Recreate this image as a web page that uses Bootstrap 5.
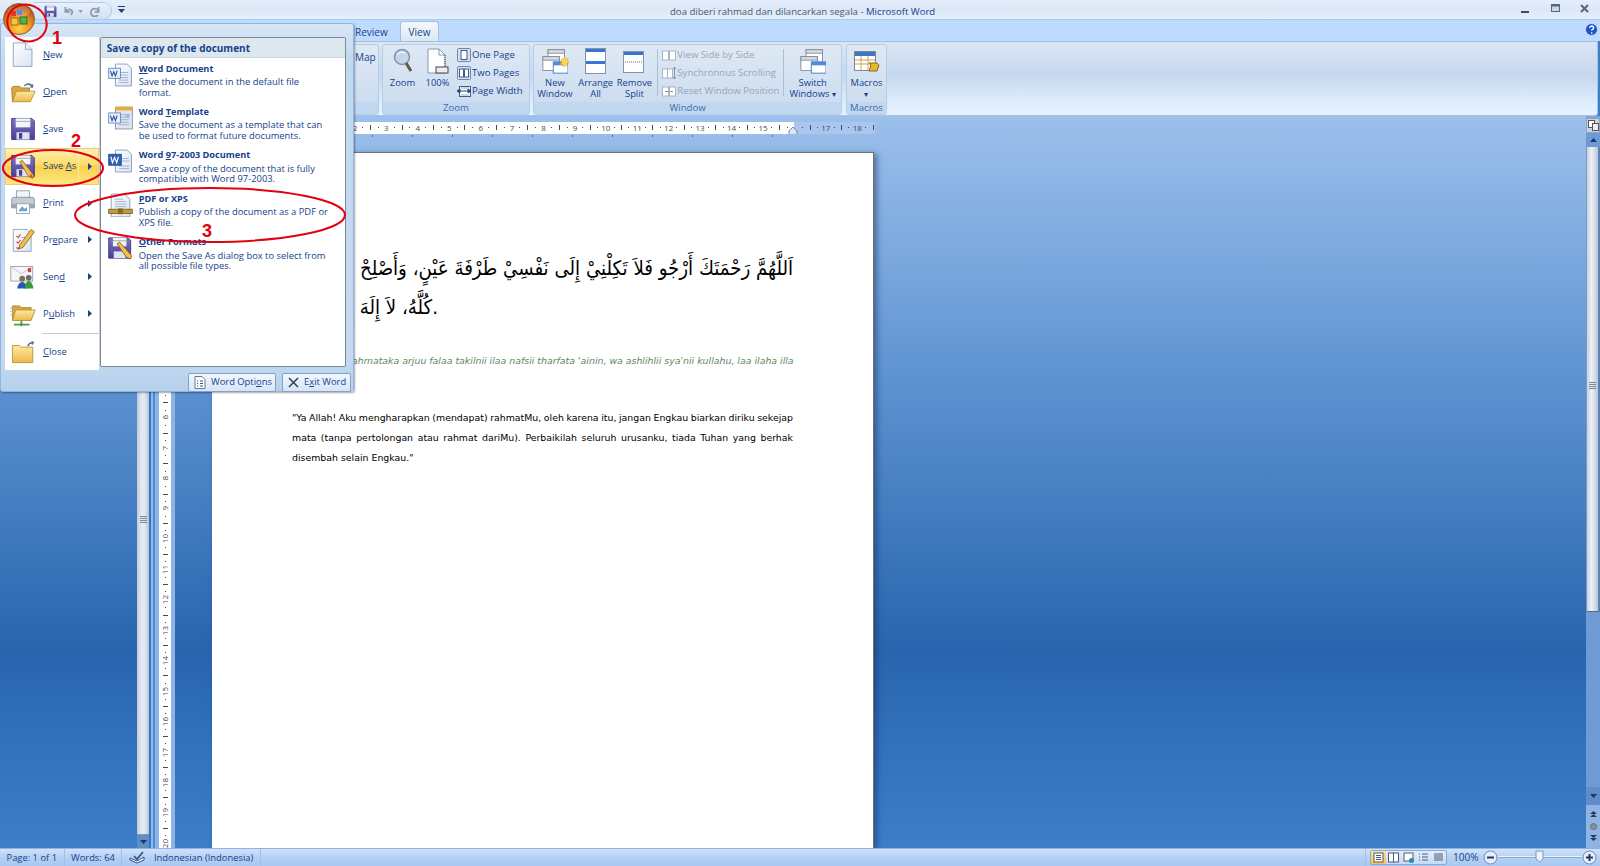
<!DOCTYPE html>
<html lang="id">
<head>
<meta charset="UTF-8">
<title>doa diberi rahmad dan dilancarkan segala - Microsoft Word</title>
<link href="https://cdn.jsdelivr.net/npm/bootstrap@5.3.1/dist/css/bootstrap.min.css" rel="stylesheet">
<style>
    html, body { height: 100%; }
    body { font-family: "Open Sans", "Noto Sans", sans-serif; font-size: 10px; color: #15428b; background: #3d7ec9; overflow: hidden; }
    svg { display: block; flex: none; }

    /* title bar + tabs */
    .titlebar { height: 20px; background: linear-gradient(#e6eefa, #dbe7f7 50%, #e6f0fc); border-bottom: 1px solid #a8c9f0; }
    .orb { width: 32px; height: 32px; margin: 3px 0 0 3px; z-index: 15; position: relative; }
    .qat { margin: 2px 0 0 -1px; height: 18px; width: 78px; border: 1px solid #b6cbe8; border-left: 0; border-radius: 0 10px 10px 0; background: linear-gradient(#e8f0fb, #d3e1f3); padding-left: 10px; }
    .qat .q-undo { margin-left: 6px; }
    .qat .q-drop { margin-left: 4px; }
    .qat .q-redo { margin-left: 7px; }
    .qat-more { margin-left: 6px; }
    .title-text { font-size: 9.6px; color: #4b5a70; left: 670px; top: 5px; }
    .title-text b { font-weight: 400; color: #15428b; }
    .winbtns { margin-left: auto; gap: 17px; padding: 3px 9px 0 0; }
    .tabs { height: 21px; background: #bfdbff; }
    .tab-review { margin-left: 355px; padding-top: 5px; width: 45px; font-size: 10px; }
    .tab-view { width: 39px; height: 20px; margin-top: 1px; background: linear-gradient(#f5f9fe, #dbe6f4); border: 1px solid #9ebfe6; border-bottom: 0; border-radius: 3px 3px 0 0; padding-top: 3px; font-size: 10px; }
    .help { margin: 3px 2px 0 auto; }

    /* ribbon */
    .ribbon { height: 75px; padding: 2px 2px 2px 3px; gap: 3px; background: linear-gradient(#dbe6f4, #c6d8ee 45%, #dcecfb 80%, #e6f3fe); border: 1px solid #a5c4e8; border-top-color: #9ebfe6; border-radius: 0 0 3px 3px; margin-right: 2px; }
    .rgroup { height: 71px; border: 1px solid #b7cde6; border-radius: 3px; background: linear-gradient(#dfe9f5, #c9daee); overflow: hidden; }
    .rgroup-body { height: 58px; }
    .rgroup-label { height: 12px; line-height: 11px; background: #c1d8f0; text-align: center; font-size: 9.6px; color: #3e6aaa; }
    .g-first { width: 375px; }
    .g-zoom { width: 148px; }
    .g-window { width: 309px; }
    .g-macros { width: 41px; margin-left: 1px; }
    .big { padding-top: 3px; line-height: 10.5px; font-size: 9.4px; text-align: center; }
    .big svg { margin-bottom: 4px; }
    .w-zoom { width: 39px; }
    .w-pct { width: 31px; }
    .w-new { width: 42px; }
    .w-arr { width: 40px; }
    .w-rem { width: 38px; }
    .w-sw { width: 57px; }
    .w-mac { width: 39px; }
    .small-col { padding: 3px 0 0 4px; gap: 4px; }
    .small-btn { height: 14px; gap: 1px; font-size: 9.6px; line-height: 14px; white-space: nowrap; }
    .g-window .small-col { padding-left: 4px; }
    .disabled-btn { color: #9aa6b6; }
    .rsep { width: 1px; height: 47px; margin-top: 4px; background: #a9bfd9; }
    .map { padding: 5px 0 0 350px; font-size: 10px; }

    /* workspace */
    .workspace { min-height: 0; background: linear-gradient(#9dc0ec, #5f94d2 35%, #2865ae 73%, #3d7ec9); overflow: hidden; }
    .left-blank { width: 137px; }
    .lscroll { width: 12px; background: #6f9ad0; }
    .lthumb { background: linear-gradient(90deg, #c0cbdb, #e6ebf2 40%, #dfe5ee 70%, #b3c2d6); border-bottom: 1px solid #8496b0; }
    .grip { width: 7px; height: 7px; background: repeating-linear-gradient(#7d8997 0 1px, transparent 1px 2px); }
    .lthumb .grip { margin-top: 400px; }
    .rthumb .grip { margin-top: 235px; }
    .arrow-box { height: 13px; background: #5f8dc7; }
    .vband { width: 26px; padding-left: 1px; background: linear-gradient(90deg, #3a76c0 0 2px, #8fbaee 2px 4px, #4d8ada 4px 6px, #8fb3e4 6px); }
    .vruler { width: 12px; height: 100%; margin-left: 9px; padding-top: 123px; background: linear-gradient(#a9c6ec 0 117px, #fff 117px); }
    .vcell { height: 31.3px; }
    .vcell span, .hcell span { flex: 1 1 0; }
    .mk { display: flex; align-items: center; justify-content: center; font-size: 8px; color: #3f4d63; line-height: 1; }
    .mk i { display: block; background: #3f4d63; }
    .hcell .mk-dot i { width: 1px; height: 1px; }
    .hcell .mk-tick i { width: 1px; height: 5px; }
    .vcell .mk-dot i { width: 1px; height: 1px; }
    .vcell .mk-tick i { width: 5px; height: 1px; }
    .vcell .mk-num { writing-mode: vertical-rl; transform: rotate(180deg); }
    .main { min-width: 0; }
    .hruler { width: 663px; height: 13px; margin: 6px 0 0 37px; padding-left: 84px; background: linear-gradient(90deg, #a9c6ec 0 80px, #fff 80px 582px, #a9c6ec 582px); overflow: hidden; position: relative; }
    .hcell { flex: none; width: 31.45px; }
    .indent { left: 576px; top: 5px; }
    .tabstops { width: 481px; height: 2px; margin: 1px 0 0 117px; background: repeating-linear-gradient(90deg, #4d6f9f 0 1px, transparent 1px 40px); }
    .page { width: 662px; height: 760px; margin: 15px 0 0 37px; padding: 96px 80px 0; background: #fff; border: 1px solid #707070; border-bottom: 0; border-left: 0; box-shadow: 3px 2px 6px rgba(20, 50, 100, .55); color: #000; font-family: "DejaVu Sans", sans-serif; }
    .ar { font-family: "DejaVu Sans Condensed", "DejaVu Sans", sans-serif; font-size: 20.2px; line-height: 39px; height: 39px; white-space: nowrap; }
    .ar-line1 { direction: rtl; }
    .ar-line2 { direction: rtl; width: 146px; }
    .latin { margin: 24px 0 0; color: #64855f; font-style: italic; font-size: 9.4px; line-height: 20px; text-align: justify; text-align-last: justify; white-space: nowrap; }
    .trans { margin: 0; font-size: 9.4px; line-height: 20px; text-align: justify; text-align-last: justify; white-space: nowrap; }
    .trans.first { margin-top: 37px; word-spacing: -1.2px; }
    .trans.last { text-align-last: left; }

    .rscroll { width: 14px; background: #7da6d9; }
    .rtoggle { height: 15px; margin-top: 2px; background: #c9d3e0; border: 1px solid #8fa3bd; }
    .rarrow { height: 14px; background: #6e9bd4; }
    .rthumb { height: 465px; background: linear-gradient(90deg, #c7d0dd, #eef1f6 40%, #dde3ec 60%, #b6c6da); border-bottom: 1px solid #4f6c99; border-left: 1px solid #7c9cc8; border-right: 2px solid #5f7fb0; }
    .rtrack { flex: 1 1 auto; background: #6f9ad3; }
    .rarrow-bottom { height: 18px; background: #5f8dc9; }
    .rbrowse { height: 43px; background: #8fb4e3; padding: 6px 0; }

    /* status bar */
    .status { height: 18px; flex: none; background: linear-gradient(#cfe2f9, #b5d0f3 50%, #a9c8f0); border-top: 1px solid #8db2e3; font-size: 9.4px; line-height: 17px; }
    .st-item { border-right: 1px solid #9fbfe6; padding: 0 6.5px; height: 17px; white-space: nowrap; }
    .st-check { margin-right: 5px; }
    .st-right { margin-left: auto; display: flex; border-left: 1px solid #9fbfe6; padding-right: 3.5px; }
    .views { height: 15px; margin: 1px 0 0 4px; border: 1px solid #86a9d8; border-radius: 2px; background: linear-gradient(#e3eefb, #c5daf5); }
    .views .v { width: 15px; }
    .views .v.on { background: linear-gradient(#fde39a, #fbc14f); }
    .pct { width: 25px; margin: 0 4.5px 0 6px; font-size: 10px; }
    .slider-line { width: 84px; height: 2px; background: #eaf1fb; border-bottom: 1px solid #8ba8cf; margin-top: 7px; position: relative; }
    .slider-thumb { left: 37px; top: -6px; }
    .zbtn { margin-top: 1px; }

    /* office menu */
    .menu { left: 0; top: 23px; width: 354px; height: 369px; padding: 13px 7px 0 4px; border: 1px solid #93b5dd; border-radius: 3px; background: linear-gradient(#d8e6f7, #c2d8f1 10%, #c5daf1 90%, #b6d0ec); z-index: 10; box-shadow: 1px 1px 2px rgba(0,0,0,.35); }
    .menu-left { width: 95px; height: 333px; background: #fff; border-right: 1px solid #c9d3de; }
    .mitem { height: 36.9px; gap: 7px; padding-left: 5px; font-size: 9.4px; position: relative; white-space: nowrap; }
    .mitem u { text-underline-offset: 1px; }
    .mitem .sub { position: absolute; right: 7px; top: 15px; }
    .mitem.active { background: linear-gradient(#fdf3b6, #fddc66 45%, #fbd04a 50%, #fde884); outline: 1px solid #e9cd7a; outline-offset: -1px; }
    .mitem.active::after { content: ""; position: absolute; left: 73px; top: 1px; bottom: 1px; width: 1px; background: #f4e9b5; }
    .msep { height: 1px; margin: .5px 0 0 37px; background: #c5ccd4; }
    .menu-right { width: 247px; height: 330px; background: #fff; border: 1px solid #7d8895; border-radius: 2px; }
    .mr-head { height: 20px; line-height: 21px; padding-left: 6px; background: #dde7ee; font-weight: 700; font-size: 10px; border-bottom: 1px solid #cfd9e2; }
    .ritem { height: 43.4px; padding: 4.5px 0 0 6px; gap: 5px; }
    .ritem .ttl { font-weight: 700; font-size: 9.2px; line-height: 12px; }
    .ritem .dsc { font-size: 9.4px; line-height: 10.7px; margin-top: 2.5px; white-space: pre-line; }
    .menu-foot { gap: 6px; padding: 3px 0 0; margin-right: -5px; justify-content: flex-end; }
    .mbtn { height: 19px; gap: 5px; padding: 0 5px; font-size: 9.4px; background: linear-gradient(#f2f7fd, #d6e5f7); border: 1px solid #7ea3d3; border-radius: 2px; white-space: nowrap; }
    .w-opt { width: 88px; }
    .w-exit { width: 69px; }

    /* annotations */
    .marks { left: 0; top: 0; z-index: 20; pointer-events: none; }
    .num { color: #e3000f; font: 700 18px/14px "Liberation Sans", sans-serif; z-index: 21; }
    .n1 { left: 52px; top: 31px; }
    .n2 { left: 71px; top: 134px; }
    .n3 { left: 202px; top: 226px; line-height: 10px; }
</style>
</head>
<body class="d-flex flex-column position-relative">

<svg width="0" height="0" class="position-absolute">
    <defs>
        <linearGradient id="fold" x1="0" y1="0" x2="0" y2="1"><stop offset="0" stop-color="#fde9a0"/><stop offset="1" stop-color="#eeb84c"/></linearGradient>
        <linearGradient id="pg" x1="0" y1="0" x2="1" y2="1"><stop offset="0" stop-color="#fff"/><stop offset="1" stop-color="#d9e4f3"/></linearGradient>
        <linearGradient id="flop" x1="0" y1="0" x2="0" y2="1"><stop offset="0" stop-color="#7d73c4"/><stop offset="1" stop-color="#4a3f96"/></linearGradient>
        <radialGradient id="orbg" cx=".5" cy=".8" r=".75"><stop offset="0" stop-color="#ffd24a"/><stop offset=".55" stop-color="#ef8a1d"/><stop offset="1" stop-color="#a5460f"/></radialGradient>
        <symbol id="i-new" viewBox="0 0 32 32"><path d="M4 1h15l8 8v21H4z" fill="url(#pg)" stroke="#8497b5"/><path d="M19 1v8h8" fill="#eef3fa" stroke="#8497b5"/></symbol>
        <symbol id="i-open" viewBox="0 0 32 32"><path d="M3 28 2 11l2-2h8l2 2h10v4z" fill="#d9a83e" stroke="#9c7a2a"/><path d="M3 28l5-13h23l-6 13z" fill="url(#fold)" stroke="#b08a33"/><path d="M17 8q5-5 10-1l2-1-1 5-4-1 2-1q-4-3-8 0z" fill="#5a6e8c"/></symbol>
        <symbol id="i-save" viewBox="0 0 32 32"><path d="M2 3h25l3 3v23H2z" fill="url(#flop)" stroke="#3a3080"/><rect x="7" y="3" width="18" height="11" fill="#f4f5fb"/><rect x="7" y="6" width="18" height="1" fill="#7fb27f"/><rect x="8" y="20" width="16" height="9" fill="#dfe2f0"/><rect x="11" y="21" width="4" height="7" fill="#4a3f96"/></symbol>
        <symbol id="i-saveas" viewBox="0 0 32 32"><use href="#i-save"/><path d="M12 11l3-2 14 18-1 4-5-2z" fill="#f0c24a" stroke="#8a5a1e"/><path d="M26 25l2 6-4-2z" fill="#c9593a"/></symbol>
        <symbol id="i-print" viewBox="0 0 32 32"><rect x="8" y="1" width="16" height="10" fill="#f2f4f7" stroke="#8d97a5"/><path d="M2 12q0-3 3-3h22q3 0 3 3v10H2z" fill="#c6ccd4" stroke="#7f8a99"/><rect x="2" y="17" width="28" height="5" fill="#9ea7b3"/><rect x="8" y="17" width="16" height="12" fill="#fff" stroke="#8d97a5"/><path d="M11 25l4-5 3 3 3-2v5H11z" fill="#6ea0dc"/></symbol>
        <symbol id="i-prep" viewBox="0 0 32 32"><path d="M4 3h17l5 5v22H4z" fill="url(#pg)" stroke="#8497b5"/><path d="M8 11l2 2 3-4M8 18l2 2 3-4M8 25l2 2 3-4" fill="none" stroke="#d2403c" stroke-width="1.4"/><path d="M14 13h6M14 20h4" stroke="#8ea3c2"/><path d="M12 22 26 3l4 3-14 19-5 2z" fill="#f0c24a" stroke="#8a5a1e"/></symbol>
        <symbol id="i-send" viewBox="0 0 32 32"><rect x="1" y="3" width="27" height="18" fill="#f4f6fa" stroke="#8d97a5"/><path d="M1 3l13 9 14-9" fill="none" stroke="#b4bcc8"/><rect x="22" y="5" width="4" height="5" fill="#d2403c"/><circle cx="15" cy="18" r="3.5" fill="#8a6d4f"/><path d="M9 30q1-8 6-8t6 8z" fill="#2b55b5"/><circle cx="23" cy="17" r="3.5" fill="#6d6d6d"/><path d="M18 30q1-9 5-9t6 9z" fill="#3a9a3d"/></symbol>
        <symbol id="i-pub" viewBox="0 0 32 32"><path d="M3 6h9l2 2h12v15H3z" fill="#d9a83e" stroke="#a98532"/><path d="M3 24l4-13h24l-5 13z" fill="url(#fold)" stroke="#b08a33"/><path d="M14 24v4M5 29h19" stroke="#4aa04a" stroke-width="2"/><circle cx="14" cy="29" r="2" fill="#4aa04a"/><path d="M0 9h3M0 13h2M0 17h2" stroke="#9cb0cc"/></symbol>
        <symbol id="i-close" viewBox="0 0 32 32"><path d="M3 8h9l2 2h14v19H3z" fill="url(#fold)" stroke="#b08a33"/><path d="M21 9q2-6 6-5l-1-2 4 2-3 4v-2q-3-1-4 3z" fill="#5a6e8c"/></symbol>
        <symbol id="i-worddoc" viewBox="0 0 32 28"><path d="M10 1h14l5 5v21H10z" fill="url(#pg)" stroke="#7f97bb"/><path d="M14 11h11M14 14h11M14 17h11M14 20h11M14 23h11" stroke="#93a9c9"/><rect x="2" y="6" width="14" height="12" fill="#e8effa" stroke="#5f82b5"/><path d="M4 9l2 6 2-5 2 5 2-6" fill="none" stroke="#2b57a5" stroke-width="1.3"/></symbol>
        <symbol id="i-template" viewBox="0 0 32 28"><rect x="10" y="1" width="20" height="26" fill="#dfe6f0" stroke="#7f8ea5"/><rect x="10" y="1" width="20" height="4" fill="#eea92f"/><path d="M14 10h12M14 13h12M14 16h12M14 19h12M14 22h12" stroke="#93a9c9"/><rect x="22" y="9" width="5" height="5" fill="#9cbde6"/><rect x="2" y="8" width="14" height="12" fill="#e8effa" stroke="#5f82b5"/><path d="M4 11l2 6 2-5 2 5 2-6" fill="none" stroke="#2b57a5" stroke-width="1.3"/></symbol>
        <symbol id="i-word97" viewBox="0 0 32 28"><path d="M10 1h14l5 5v21H10z" fill="url(#pg)" stroke="#7f97bb"/><path d="M18 11h8M18 14h8M14 20h12M14 23h12" stroke="#93a9c9"/><rect x="2" y="6" width="15" height="13" fill="#2d62b8" stroke="#1f4c96"/><path d="M4.5 9l2 7 2.5-6 2.5 6 2-7" fill="none" stroke="#fff" stroke-width="1.4"/></symbol>
        <symbol id="i-pdf" viewBox="0 0 32 28"><path d="M5 1h16l6 6v21H5z" fill="url(#pg)" stroke="#8497b5"/><path d="M9 7h10M9 10h14M9 13h14M9 16h14" stroke="#93a9c9"/><rect x="2" y="19" width="28" height="5" fill="#c49a3c" stroke="#7d5e1c"/><rect x="13" y="18" width="6" height="7" fill="#8a6a24"/></symbol>
        <symbol id="i-other" viewBox="0 0 32 28"><path d="M2 2h23l3 3v21H2z" fill="url(#flop)" stroke="#3a3080"/><rect x="7" y="2" width="16" height="10" fill="#f4f5fb"/><rect x="7" y="5" width="16" height="1" fill="#7fb27f"/><rect x="8" y="18" width="14" height="8" fill="#dfe2f0"/><path d="M12 9l3-2 14 16-1 4-5-2z" fill="#f0c24a" stroke="#8a5a1e"/></symbol>
        <symbol id="r-one" viewBox="0 0 14 14"><rect x=".5" y=".5" width="13" height="13" rx="1" fill="#d6e2f1" stroke="#6a85ab"/><rect x="4" y="2.5" width="6" height="9" fill="#fff" stroke="#3f5c8a"/></symbol>
        <symbol id="r-two" viewBox="0 0 14 14"><rect x=".5" y=".5" width="13" height="13" rx="1" fill="#d6e2f1" stroke="#6a85ab"/><rect x="2.5" y="3" width="4" height="8" fill="#fff" stroke="#3f5c8a"/><rect x="7.5" y="3" width="4" height="8" fill="#fff" stroke="#3f5c8a"/></symbol>
        <symbol id="r-width" viewBox="0 0 14 14"><rect x="2.5" y="2.5" width="11" height="10" fill="#fff" stroke="#3f5c8a"/><path d="M0 7h14M0 7l3-2v4zM14 7l-3-2v4z" fill="#2b4a7c" stroke="#2b4a7c"/><path d="M4 4h8M4 11h8" stroke="#93a9c9"/></symbol>
        <symbol id="r-win" viewBox="0 0 30 30"><rect x="7" y="2" width="19" height="16" fill="#fff" stroke="#7d8896"/><rect x="7" y="2" width="19" height="4" fill="#d8dde5" stroke="#7d8896"/><rect x="1" y="10" width="19" height="16" fill="#fff" stroke="#7d8896"/><rect x="1" y="10" width="19" height="4" fill="#d8dde5" stroke="#7d8896"/><rect x="13" y="16" width="17" height="13" fill="#fff" stroke="#3c72c2"/><rect x="13" y="16" width="17" height="4" fill="#4e8ae0"/></symbol>
    </defs>
</svg>

<!-- title bar -->
<div class="titlebar d-flex flex-none position-relative">
    <svg class="orb" viewBox="0 0 32 32">
        <circle cx="16" cy="16" r="15.5" fill="url(#orbg)" stroke="#8a6a3a"/>
        <ellipse cx="16" cy="8" rx="11" ry="6" fill="#fff" opacity=".2"/>
        <rect x="14" y="7" width="5" height="5" fill="#4f8fe0"/><rect x="8" y="8" width="5" height="5" fill="#d93a2b"/>
        <rect x="8" y="15" width="7" height="7" fill="#f5c43a" stroke="#a86a10"/><rect x="17" y="14" width="7" height="7" fill="#58b146" stroke="#1e7a2c"/>
    </svg>
    <div class="qat d-flex align-items-center">
        <svg width="13" height="13"><use href="#i-save"/></svg>
        <svg class="q-undo" width="11" height="12" viewBox="0 0 14 14"><path d="M3 2v6h6M3 8q4-5 8-2 2 3-1 6" fill="none" stroke="#8a9ab2" stroke-width="2.200"/></svg>
        <svg class="q-drop" width="5" height="3" viewBox="0 0 6 4"><path d="M0 0h6L3 4z" fill="#8a9ab2"/></svg>
        <svg class="q-redo" width="11" height="12" viewBox="0 0 14 14"><path d="M11 2v6H6M11 8A5 5 0 1 0 10 12" fill="none" stroke="#8a9ab2" stroke-width="2.200"/></svg>
    </div>
    <svg class="qat-more align-self-center" width="7" height="8" viewBox="0 0 7 8"><path d="M0 0h7v1H0zM0 3h7L3.5 7z" fill="#1f3f72"/></svg>
    <div class="title-text position-absolute text-nowrap">doa diberi rahmad dan dilancarkan segala - <b>Microsoft Word</b></div>
    <div class="winbtns d-flex">
        <svg width="12" height="12" viewBox="0 0 12 12"><rect x="0" y="8" width="8" height="2" fill="#3b4d66"/></svg>
        <svg width="12" height="12" viewBox="0 0 12 12"><rect x="1.5" y="1.5" width="8" height="7" fill="#c9d6e8" stroke="#56677f"/><rect x="1.5" y="1.5" width="8" height="2" fill="#56677f"/></svg>
        <svg width="12" height="12" viewBox="0 0 12 12"><path d="M2 2l7 7M9 2l-7 7" stroke="#56677f" stroke-width="2"/></svg>
    </div>
</div>

<!-- tabs -->
<div class="tabs d-flex flex-none">
    <div class="tab-review">Review</div>
    <div class="tab-view text-center">View</div>
    <svg class="help" width="13" height="13" viewBox="0 0 13 13"><circle cx="6.5" cy="6.5" r="6" fill="#1d55c8" stroke="#c9d9ef"/><path d="M4.500 5q.3-2 2.200-2 2 .1 1.900 2-.2 1-1.200 1.500-.7.4-.7 1.300" fill="none" stroke="#fff" stroke-width="1.3"/><rect x="6" y="9.300" width="1.400" height="1.400" fill="#fff"/></svg>
</div>

<!-- ribbon -->
<div class="ribbon d-flex flex-none">
    <div class="rgroup g-first d-flex flex-column">
        <div class="rgroup-body map">Map</div>
        <div class="rgroup-label"></div>
    </div>
    <div class="rgroup g-zoom d-flex flex-column">
        <div class="rgroup-body d-flex">
            <div class="big w-zoom d-flex flex-column align-items-center">
                <svg width="22" height="26" viewBox="0 0 22 26"><circle cx="10" cy="9" r="7.500" fill="#c3d6ec" stroke="#8494a8" stroke-width="1.600"/><path d="M5 7a6 5 0 0 1 8-2" fill="none" stroke="#fff"/><path d="M14 15l5 8" stroke="#5e5a50" stroke-width="3"/></svg>
                <span>Zoom</span>
            </div>
            <div class="big w-pct d-flex flex-column align-items-center">
                <svg width="22" height="26" viewBox="0 0 22 26"><path d="M1 1h11l6 6v18H1z" fill="#fff" stroke="#8497b5"/><path d="M12 1v6h6" fill="none" stroke="#8497b5"/><path d="M18 7v18" stroke="#555" stroke-dasharray="1 1"/><rect x="9" y="19" width="12" height="6" fill="#eee" stroke="#444"/></svg>
                <span>100%</span>
            </div>
            <div class="small-col d-flex flex-column">
                <div class="small-btn d-flex align-items-center"><svg width="14" height="14"><use href="#r-one"/></svg>One Page</div>
                <div class="small-btn d-flex align-items-center"><svg width="14" height="14"><use href="#r-two"/></svg>Two Pages</div>
                <div class="small-btn d-flex align-items-center"><svg width="14" height="14"><use href="#r-width"/></svg>Page Width</div>
            </div>
        </div>
        <div class="rgroup-label">Zoom</div>
    </div>
    <div class="rgroup g-window d-flex flex-column">
        <div class="rgroup-body d-flex">
            <div class="big w-new d-flex flex-column align-items-center">
                <svg width="28" height="26" viewBox="0 0 30 30"><use href="#r-win"/><path d="M24 13l2-3 1 3 3-1-1 3 3 1-3 2 1 3-3-1-2 2-1-3-3 0 2-3-1-3z" fill="#ffd84a" stroke="#e6a51e" stroke-width=".6"/></svg>
                <span>New<br>Window</span>
            </div>
            <div class="big w-arr d-flex flex-column align-items-center">
                <svg width="22" height="26" viewBox="0 0 22 26"><rect x=".5" y=".5" width="20" height="25" fill="#fff" stroke="#8494a8"/><rect x="1" y="1" width="19" height="3" fill="#3876d4"/><rect x="1" y="13" width="19" height="3" fill="#3876d4"/></svg>
                <span>Arrange<br>All</span>
            </div>
            <div class="big w-rem d-flex flex-column align-items-center">
                <svg width="22" height="26" viewBox="0 0 22 26"><rect x=".5" y="3.500" width="20" height="21" fill="#fff" stroke="#8494a8"/><rect x="1" y="4" width="19" height="3" fill="#3876d4"/><path d="M2 14h17" stroke="#666" stroke-dasharray="1 1"/></svg>
                <span>Remove<br>Split</span>
            </div>
            <div class="rsep ms-1"></div>
            <div class="small-col d-flex flex-column">
                <div class="small-btn disabled-btn d-flex align-items-center"><svg width="14" height="14" viewBox="0 0 14 14"><rect x=".5" y="3" width="6" height="9" fill="#fff" stroke="#aab4c2"/><rect x="7.500" y="3" width="6" height="9" fill="#fff" stroke="#aab4c2"/></svg>View Side by Side</div>
                <div class="small-btn disabled-btn d-flex align-items-center"><svg width="14" height="14" viewBox="0 0 14 14"><rect x=".5" y="3" width="5" height="9" fill="#fff" stroke="#aab4c2"/><rect x="5.500" y="3" width="5" height="9" fill="#fff" stroke="#aab4c2"/><path d="M12.500 1v12M11 3l1.500-2L14 3M11 11l1.500 2 1.500-2" fill="none" stroke="#8b97a8"/></svg>Synchronous Scrolling</div>
                <div class="small-btn disabled-btn d-flex align-items-center"><svg width="14" height="14" viewBox="0 0 14 14"><rect x=".5" y="3" width="6" height="9" fill="#fff" stroke="#aab4c2"/><rect x="7.500" y="3" width="6" height="9" fill="#fff" stroke="#aab4c2"/><path d="M3 7.500h3M11 7.500H8" stroke="#8b97a8"/></svg>Reset Window Position</div>
            </div>
            <div class="rsep ms-1"></div>
            <div class="big w-sw d-flex flex-column align-items-center">
                <svg width="28" height="26" viewBox="0 0 30 30"><use href="#r-win"/></svg>
                <span>Switch<br>Windows <small>&#9662;</small></span>
            </div>
        </div>
        <div class="rgroup-label">Window</div>
    </div>
    <div class="rgroup g-macros d-flex flex-column">
        <div class="rgroup-body">
            <div class="big w-mac d-flex flex-column align-items-center">
                <svg width="26" height="26" viewBox="0 0 26 24"><rect x=".5" y="2.500" width="21" height="19" fill="#fff" stroke="#7d8896"/><rect x="1" y="3" width="20" height="4" fill="#3f76c6"/><path d="M1 11h20M1 15h20M7 7v14M14 7v14" stroke="#c7a35c"/><path d="M15 14h8l2 2-2 6h-8l2-6z" fill="#e8b52e" stroke="#8a6a14"/></svg>
                <span>Macros<br><small>&#9662;</small></span>
            </div>
        </div>
        <div class="rgroup-label">Macros</div>
    </div>
</div>

<!-- document area -->
<div class="workspace d-flex flex-grow-1">
    <div class="left-blank flex-none"></div>
    <div class="lscroll d-flex flex-column flex-none">
        <div class="lthumb flex-grow-1 d-flex flex-column align-items-center">
            <div class="grip"></div>
        </div>
        <div class="arrow-box d-flex align-items-center justify-content-center"><svg width="7" height="4" viewBox="0 0 7 4"><path d="M0 0h7L3.500 4z" fill="#1f3668"/></svg></div>
    </div>
    <div class="vband flex-none">
        <div class="vruler d-flex flex-column" id="vruler"></div>
    </div>
    <div class="main flex-grow-1 d-flex flex-column">
        <div class="hruler d-flex flex-none" id="hruler">
            <svg class="indent position-absolute" width="10" height="8" viewBox="0 0 10 8"><path d="M5 0l4 4v4H1V4z" fill="#dbe6f3" stroke="#6f86a6"/></svg>
        </div>
        <div class="tabstops flex-none"></div>
        <div class="page flex-none">
            <div class="ar ar-line1">اَللَّهُمَّ رَحْمَتَكَ أَرْجُو فَلاَ تَكِلْنِيْ إِلَى نَفْسِيْ طَرْفَةَ عَيْنٍ، وَأَصْلِحْ</div>
            <div class="ar ar-line2">.كُلَّهُ، لاَ إِلَهَ إِلاَّ أَنْتَ</div>
            <p class="latin">Allahumma rahmataka arjuu falaa takilnii ilaa nafsii tharfata 'ainin, wa ashlihlii sya'nii kullahu, laa ilaha illa</p>
            <p class="trans first">"Ya Allah! Aku mengharapkan (mendapat) rahmatMu, oleh karena itu, jangan Engkau biarkan diriku sekejap</p>
            <p class="trans">mata (tanpa pertolongan atau rahmat dariMu). Perbaikilah seluruh urusanku, tiada Tuhan yang berhak</p>
            <p class="trans last">disembah selain Engkau."</p>
        </div>
    </div>
    <div class="rscroll d-flex flex-column flex-none">
        <div class="rtoggle d-flex align-items-center justify-content-center"><svg width="11" height="11" viewBox="0 0 11 11"><rect x=".5" y=".5" width="6" height="7" fill="#fff" stroke="#555"/><rect x="4.500" y="3.500" width="6" height="7" fill="#eee" stroke="#555"/></svg></div>
        <div class="rarrow d-flex align-items-center justify-content-center"><svg width="7" height="4" viewBox="0 0 7 4"><path d="M3.500 0L7 4H0z" fill="#1f3668"/></svg></div>
        <div class="rthumb d-flex flex-column align-items-center flex-none"><div class="grip"></div></div>
        <div class="rtrack"></div>
        <div class="rarrow-bottom d-flex align-items-center justify-content-center"><svg width="7" height="4" viewBox="0 0 7 4"><path d="M0 0h7L3.500 4z" fill="#1f3668"/></svg></div>
        <div class="rbrowse d-flex flex-column align-items-center justify-content-between">
            <svg width="7" height="7" viewBox="0 0 7 7"><path d="M3.500 0L7 3H0zM3.500 3L7 6H0z" fill="#2b3a55"/></svg>
            <svg width="7" height="7" viewBox="0 0 7 7"><circle cx="3.500" cy="3.500" r="3" fill="#8a8f99" stroke="#4b5160" stroke-width=".6"/></svg>
            <svg width="7" height="7" viewBox="0 0 7 7"><path d="M0 0h7L3.500 3zM0 3h7L3.500 6z" fill="#2b3a55"/></svg>
        </div>
    </div>
</div>

<!-- status bar -->
<div class="status d-flex">
    <div class="st-item">Page: 1 of 1</div>
    <div class="st-item">Words: 64</div>
    <div class="st-item d-flex align-items-center">
        <svg class="st-check" width="16" height="13" viewBox="0 0 16 13"><path d="M1 7l7 3 7-4v3l-7 3-7-3z" fill="#fff" stroke="#2d4f85"/><path d="M5 5l3 3 6-7" fill="none" stroke="#2d4f85" stroke-width="1.600"/></svg>
        <span class="ms-1">Indonesian (Indonesia)</span>
    </div>
    <div class="st-right">
        <div class="views d-flex">
            <div class="v on d-flex align-items-center justify-content-center"><svg width="11" height="11" viewBox="0 0 11 11"><rect x="1" y="1" width="9" height="9" fill="#fff" stroke="#4d5c72"/><path d="M3 3.500h5M3 5.500h5M3 7.500h5" stroke="#4d5c72"/></svg></div>
            <div class="v d-flex align-items-center justify-content-center"><svg width="11" height="11" viewBox="0 0 11 11"><rect x=".5" y="1" width="5" height="9" fill="#fff" stroke="#4d5c72"/><rect x="5.500" y="1" width="5" height="9" fill="#fff" stroke="#4d5c72"/></svg></div>
            <div class="v d-flex align-items-center justify-content-center"><svg width="11" height="11" viewBox="0 0 11 11"><rect x="1" y="1" width="9" height="8" fill="#fff" stroke="#4d5c72"/><circle cx="8.500" cy="8.500" r="2.500" fill="#1e8fb0"/></svg></div>
            <div class="v d-flex align-items-center justify-content-center"><svg width="11" height="11" viewBox="0 0 11 11"><path d="M4 2h6M4 5h6M4 8h6M1 2h1M1 5h1M1 8h1" stroke="#4d5c72"/></svg></div>
            <div class="v d-flex align-items-center justify-content-center"><svg width="11" height="11" viewBox="0 0 11 11"><path d="M1 2h9M1 4h9M1 6h9M1 8h9" stroke="#4d5c72"/></svg></div>
        </div>
        <span class="pct">100%</span>
        <svg class="zbtn" width="15" height="15" viewBox="0 0 15 15"><circle cx="7.500" cy="7.500" r="6.500" fill="#e6eef9" stroke="#6f8fbd"/><rect x="4" y="6.500" width="7" height="2" fill="#1f3668"/></svg>
        <div class="slider-line">
            <svg class="slider-thumb position-absolute" width="9" height="13" viewBox="0 0 9 13"><path d="M1 1h7v8l-3.500 3L1 9z" fill="#eef3fa" stroke="#7c95b8"/></svg>
        </div>
        <svg class="zbtn" width="15" height="15" viewBox="0 0 15 15"><circle cx="7.500" cy="7.500" r="6.500" fill="#e6eef9" stroke="#6f8fbd"/><path d="M4 6.500h7v2H4zM6.500 4h2v7h-2z" fill="#1f3668"/></svg>
    </div>
</div>

<!-- office menu -->
<div class="menu position-absolute d-flex flex-column">
    <div class="d-flex">
        <div class="menu-left flex-none">
            <div class="mitem d-flex align-items-center"><svg width="26" height="26"><use href="#i-new"/></svg><span><u>N</u>ew</span></div>
            <div class="mitem d-flex align-items-center"><svg width="26" height="26"><use href="#i-open"/></svg><span><u>O</u>pen</span></div>
            <div class="mitem d-flex align-items-center"><svg width="26" height="26"><use href="#i-save"/></svg><span><u>S</u>ave</span></div>
            <div class="mitem active d-flex align-items-center"><svg width="26" height="26"><use href="#i-saveas"/></svg><span>Save <u>A</u>s</span><svg class="sub" width="4" height="7" viewBox="0 0 4 7"><path d="M0 0l4 3.500L0 7z" fill="#15428b"/></svg></div>
            <div class="mitem d-flex align-items-center"><svg width="26" height="26"><use href="#i-print"/></svg><span><u>P</u>rint</span><svg class="sub" width="4" height="7" viewBox="0 0 4 7"><path d="M0 0l4 3.500L0 7z" fill="#15428b"/></svg></div>
            <div class="mitem d-flex align-items-center"><svg width="26" height="26"><use href="#i-prep"/></svg><span>Pr<u>e</u>pare</span><svg class="sub" width="4" height="7" viewBox="0 0 4 7"><path d="M0 0l4 3.500L0 7z" fill="#15428b"/></svg></div>
            <div class="mitem d-flex align-items-center"><svg width="26" height="26"><use href="#i-send"/></svg><span>Sen<u>d</u></span><svg class="sub" width="4" height="7" viewBox="0 0 4 7"><path d="M0 0l4 3.500L0 7z" fill="#15428b"/></svg></div>
            <div class="mitem d-flex align-items-center"><svg width="26" height="26"><use href="#i-pub"/></svg><span>P<u>u</u>blish</span><svg class="sub" width="4" height="7" viewBox="0 0 4 7"><path d="M0 0l4 3.500L0 7z" fill="#15428b"/></svg></div>
            <div class="msep"></div>
            <div class="mitem d-flex align-items-center"><svg width="26" height="26"><use href="#i-close"/></svg><span><u>C</u>lose</span></div>
        </div>
        <div class="menu-right flex-none">
            <div class="mr-head">Save a copy of the document</div>
            <div class="ritem d-flex">
                <svg width="27" height="24"><use href="#i-worddoc"/></svg>
                <div><div class="ttl"><u>W</u>ord Document</div><div class="dsc">Save the document in the default file
format.</div></div>
            </div>
            <div class="ritem d-flex">
                <svg width="27" height="24"><use href="#i-template"/></svg>
                <div><div class="ttl">Word <u>T</u>emplate</div><div class="dsc">Save the document as a template that can
be used to format future documents.</div></div>
            </div>
            <div class="ritem d-flex">
                <svg width="27" height="24"><use href="#i-word97"/></svg>
                <div><div class="ttl">Word <u>9</u>7-2003 Document</div><div class="dsc">Save a copy of the document that is fully
compatible with Word 97-2003.</div></div>
            </div>
            <div class="ritem d-flex">
                <svg width="27" height="24"><use href="#i-pdf"/></svg>
                <div><div class="ttl"><u>P</u>DF or XPS</div><div class="dsc">Publish a copy of the document as a PDF or
XPS file.</div></div>
            </div>
            <div class="ritem d-flex">
                <svg width="27" height="24"><use href="#i-other"/></svg>
                <div><div class="ttl"><u>O</u>ther Formats</div><div class="dsc">Open the Save As dialog box to select from
all possible file types.</div></div>
            </div>
        </div>
    </div>
    <div class="menu-foot d-flex">
        <div class="mbtn w-opt d-flex align-items-center"><svg width="12" height="13" viewBox="0 0 12 13"><path d="M1 .5h7l3 3v9H1z" fill="#fff" stroke="#6b7a90"/><path d="M3 5h1M3 7.500h1M3 10h1M6 5h3M6 7.500h3M6 10h3" stroke="#3f5170"/></svg><span>Word Opti<u>o</u>ns</span></div>
        <div class="mbtn w-exit d-flex align-items-center"><svg width="11" height="11" viewBox="0 0 11 11"><path d="M1 1l9 9M10 1l-9 9" stroke="#2d3e58" stroke-width="1.500"/></svg><span>E<u>x</u>it Word</span></div>
    </div>
</div>

<!-- annotations drawn over the screenshot -->
<svg class="marks position-absolute" width="1600" height="866" viewBox="0 0 1600 866">
    <g fill="none" stroke="#e3000f" stroke-width="2">
        <ellipse cx="27" cy="23" rx="20" ry="18" transform="rotate(25 27 23)"/>
        <ellipse cx="53" cy="168" rx="50" ry="18"/>
        <ellipse cx="210" cy="215" rx="135" ry="27"/>
    </g>
</svg>
<span class="num n1 position-absolute">1</span>
<span class="num n2 position-absolute">2</span>
<span class="num n3 position-absolute">3</span>

<script src="https://cdn.jsdelivr.net/npm/bootstrap@5.3.1/dist/js/bootstrap.bundle.min.js"></script>
<script>
    // ruler marks, one cell per centimetre
    const rulerCell = (cls, n) => `
        <div class="${cls}">
            <span class="mk mk-dot"><i></i></span>
            <span class="mk mk-tick"><i></i></span>
            <span class="mk mk-dot"><i></i></span>
            <span class="mk mk-num">${n}</span>
        </div>`;

    let h = '';
    for (let n = 1; n <= 19; n++) {
        h += rulerCell('hcell d-flex', n === 16 || n === 19 ? '' : n);
    }
    document.getElementById('hruler').insertAdjacentHTML('beforeend', h);

    let v = '';
    for (let n = 1; n <= 20; n++) {
        v += rulerCell('vcell d-flex flex-column flex-none', n);
    }
    document.getElementById('vruler').innerHTML = v;
</script>
</body>
</html>
